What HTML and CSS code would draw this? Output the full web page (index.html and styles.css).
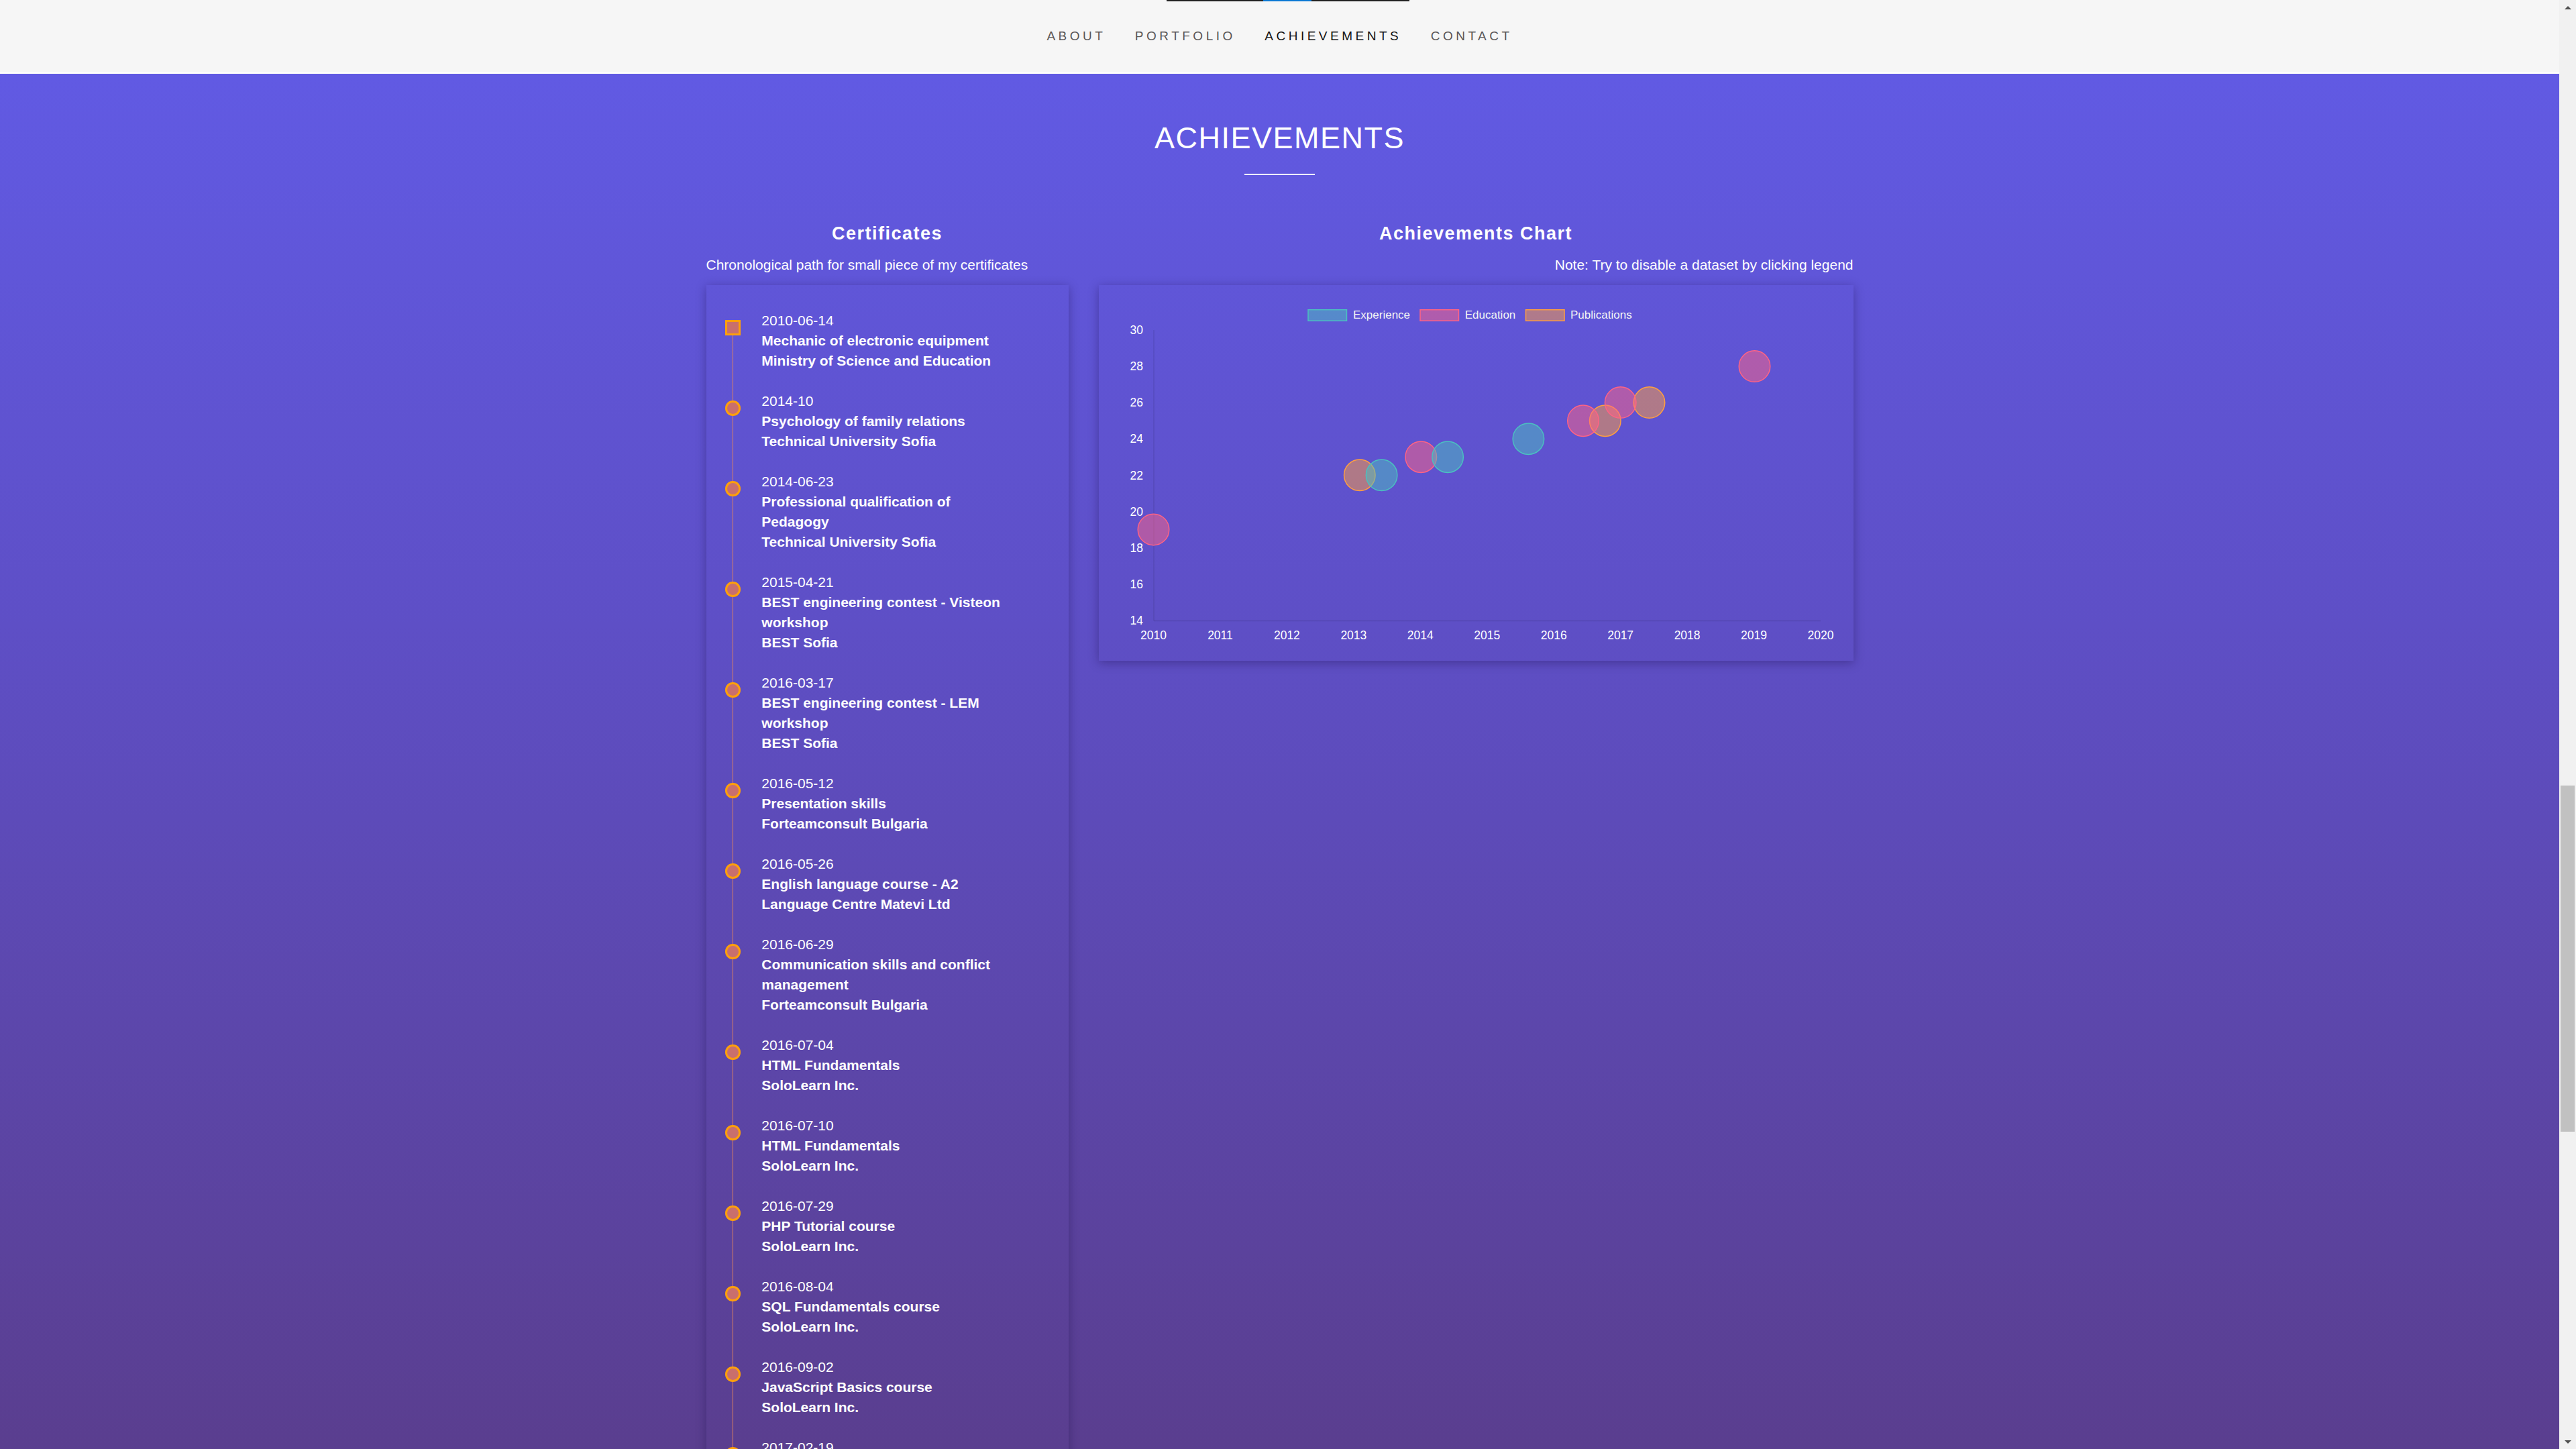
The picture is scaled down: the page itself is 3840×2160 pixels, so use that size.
FILE: index.html
```html
<!DOCTYPE html>
<html lang="en">
<head>
<meta charset="utf-8">
<title>Achievements</title>
<link rel="stylesheet" href="styles.css">
</head>
<body>
<div class="window">
  <div class="page">
    <nav class="nav">
      <div class="nav-progress"><span class="nav-progress-fill"></span></div>
      <a class="nav-link">About</a>
      <a class="nav-link">Portfolio</a>
      <a class="nav-link nav-link--active">Achievements</a>
      <a class="nav-link">Contact</a>
    </nav>
    <section class="achievements">
      <h2 class="section-title">ACHIEVEMENTS</h2>
      <div class="section-rule"></div>
      <div class="columns">
        <div class="col">
          <h3 class="col-title">Certificates</h3>
          <p class="col-sub">Chronological path for small piece of my certificates</p>
          <div class="card timeline-card">
            <ul class="timeline">
              <li class="tl-item"><span class="tl-marker tl-marker--square"></span><div class="tl-text"><div class="tl-date">2010-06-14</div><div class="tl-strong">Mechanic of electronic equipment</div><div class="tl-strong">Ministry of Science and Education</div></div></li>
              <li class="tl-item"><span class="tl-marker"></span><div class="tl-text"><div class="tl-date">2014-10</div><div class="tl-strong">Psychology of family relations</div><div class="tl-strong">Technical University Sofia</div></div></li>
              <li class="tl-item"><span class="tl-marker"></span><div class="tl-text"><div class="tl-date">2014-06-23</div><div class="tl-strong">Professional qualification of Pedagogy</div><div class="tl-strong">Technical University Sofia</div></div></li>
              <li class="tl-item"><span class="tl-marker"></span><div class="tl-text"><div class="tl-date">2015-04-21</div><div class="tl-strong">BEST engineering contest - Visteon workshop</div><div class="tl-strong">BEST Sofia</div></div></li>
              <li class="tl-item"><span class="tl-marker"></span><div class="tl-text"><div class="tl-date">2016-03-17</div><div class="tl-strong">BEST engineering contest - LEM workshop</div><div class="tl-strong">BEST Sofia</div></div></li>
              <li class="tl-item"><span class="tl-marker"></span><div class="tl-text"><div class="tl-date">2016-05-12</div><div class="tl-strong">Presentation skills</div><div class="tl-strong">Forteamconsult Bulgaria</div></div></li>
              <li class="tl-item"><span class="tl-marker"></span><div class="tl-text"><div class="tl-date">2016-05-26</div><div class="tl-strong">English language course - A2</div><div class="tl-strong">Language Centre Matevi Ltd</div></div></li>
              <li class="tl-item"><span class="tl-marker"></span><div class="tl-text"><div class="tl-date">2016-06-29</div><div class="tl-strong">Communication skills and conflict management</div><div class="tl-strong">Forteamconsult Bulgaria</div></div></li>
              <li class="tl-item"><span class="tl-marker"></span><div class="tl-text"><div class="tl-date">2016-07-04</div><div class="tl-strong">HTML Fundamentals</div><div class="tl-strong">SoloLearn Inc.</div></div></li>
              <li class="tl-item"><span class="tl-marker"></span><div class="tl-text"><div class="tl-date">2016-07-10</div><div class="tl-strong">HTML Fundamentals</div><div class="tl-strong">SoloLearn Inc.</div></div></li>
              <li class="tl-item"><span class="tl-marker"></span><div class="tl-text"><div class="tl-date">2016-07-29</div><div class="tl-strong">PHP Tutorial course</div><div class="tl-strong">SoloLearn Inc.</div></div></li>
              <li class="tl-item"><span class="tl-marker"></span><div class="tl-text"><div class="tl-date">2016-08-04</div><div class="tl-strong">SQL Fundamentals course</div><div class="tl-strong">SoloLearn Inc.</div></div></li>
              <li class="tl-item"><span class="tl-marker"></span><div class="tl-text"><div class="tl-date">2016-09-02</div><div class="tl-strong">JavaScript Basics course</div><div class="tl-strong">SoloLearn Inc.</div></div></li>
              <li class="tl-item"><span class="tl-marker"></span><div class="tl-text"><div class="tl-date">2017-02-19</div><div class="tl-strong">CSS Fundamentals course</div><div class="tl-strong">SoloLearn Inc.</div></div></li>
            </ul>
          </div>
        </div>
        <div class="col">
          <h3 class="col-title">Achievements Chart</h3>
          <p class="col-sub col-sub--right">Note: Try to disable a dataset by clicking legend</p>
          <div class="card chart-card">
            <svg class="chart" viewBox="0 0 1125 560" width="1125" height="560">
              <g class="legend">
                <rect x="312" y="36.75" width="57.5" height="16.5" class="exp"/>
                <text x="379" y="50">Experience</text>
                <rect x="479" y="36.75" width="57.5" height="16.5" class="edu"/>
                <text x="545.7" y="50">Education</text>
                <rect x="636.5" y="36.75" width="57.5" height="16.5" class="pub"/>
                <text x="703" y="50">Publications</text>
              </g>
              <line class="axis" x1="82" y1="67" x2="82" y2="500.5"/>
              <line class="axis" x1="82" y1="500.5" x2="1076" y2="500.5"/>
              <g class="ylabels">
                <text x="66" y="73.2">30</text>
                <text x="66" y="127.3">28</text>
                <text x="66" y="181.3">26</text>
                <text x="66" y="235.4">24</text>
                <text x="66" y="289.5">22</text>
                <text x="66" y="343.5">20</text>
                <text x="66" y="397.6">18</text>
                <text x="66" y="451.6">16</text>
                <text x="66" y="505.7">14</text>
              </g>
              <g class="xlabels">
                <text x="81.5" y="528">2010</text>
                <text x="180.95" y="528">2011</text>
                <text x="280.4" y="528">2012</text>
                <text x="379.85" y="528">2013</text>
                <text x="479.3" y="528">2014</text>
                <text x="578.75" y="528">2015</text>
                <text x="678.2" y="528">2016</text>
                <text x="777.65" y="528">2017</text>
                <text x="877.1" y="528">2018</text>
                <text x="976.55" y="528">2019</text>
                <text x="1076" y="528">2020</text>
              </g>
              <g class="bubbles">
                <circle class="pub" cx="388.8" cy="283.3" r="23.25"/>
                <circle class="pub" cx="754.8" cy="202.2" r="23.25"/>
                <circle class="pub" cx="820.5" cy="175.1" r="23.25"/>
                <circle class="edu" cx="81.5" cy="364.4" r="23.25"/>
                <circle class="edu" cx="480.3" cy="256.2" r="23.25"/>
                <circle class="edu" cx="722" cy="202.2" r="23.25"/>
                <circle class="edu" cx="777.7" cy="175.1" r="23.25"/>
                <circle class="edu" cx="977.5" cy="121.1" r="23.25"/>
                <circle class="exp" cx="421.6" cy="283.3" r="23.25"/>
                <circle class="exp" cx="520.1" cy="256.2" r="23.25"/>
                <circle class="exp" cx="640.4" cy="229.2" r="23.25"/>
              </g>
            </svg>
          </div>
        </div>
      </div>
    </section>
  </div>
  <div class="scrollbar">
    <div class="sb-btn"><span class="sb-arrow sb-arrow--up"></span></div>
    <div class="sb-track"><div class="sb-thumb"></div></div>
    <div class="sb-btn"><span class="sb-arrow sb-arrow--down"></span></div>
  </div>
</div>
</body>
</html>
```

FILE: styles.css
```css
html, body {
  margin: 0;
  padding: 0;
  height: 100%;
  overflow: hidden;
}

body {
  font-family: "Liberation Sans", Arial, sans-serif;
  color: #fff;
}

.window {
  display: flex;
  height: 2160px;
  overflow: hidden;
}

.page {
  flex: 1;
  display: flex;
  flex-direction: column;
  min-width: 0;
}

/* ---------- Navigation ---------- */
.nav {
  position: relative;
  flex: none;
  height: 107px;
  border-bottom: 3px solid #fdfdfd;
  background: #f6f6f6;
  display: flex;
  justify-content: center;
  align-items: center;
}

.nav-progress {
  position: absolute;
  top: 0;
  left: 1739px;
  width: 362px;
  height: 2px;
  background: #222;
}

.nav-progress-fill {
  position: absolute;
  top: 0;
  left: 144px;
  width: 72px;
  height: 2px;
  background: #0b79d4;
}

.nav-link {
  padding: 0 21.75px;
  font-size: 19px;
  letter-spacing: 4.5px;
  text-transform: uppercase;
  color: #5a5656;
  text-decoration: none;
  line-height: 30px;
}

.nav-link--active {
  color: #111;
}

/* ---------- Section ---------- */
.achievements {
  flex: 1;
  overflow: hidden;
  padding-top: 71px;
  background: linear-gradient(to bottom, #615ae3 0%, #5e4fc6 40%, #5a3e8f 100%);
}

.section-title {
  margin: 0;
  font-size: 45px;
  font-weight: normal;
  letter-spacing: 1.5px;
  line-height: 49.5px;
  text-align: center;
}

.section-rule {
  width: 105px;
  height: 2px;
  margin: 28.5px auto 0;
  background: #fff;
}

.columns {
  width: 1710px;
  margin: 73px auto 0;
  display: grid;
  grid-template-columns: 540px 1125px;
  column-gap: 45px;
  align-items: start;
}

.col-title {
  margin: 0;
  font-size: 27px;
  font-weight: bold;
  letter-spacing: 1.5px;
  line-height: 29.7px;
  text-align: center;
}

.col-sub {
  margin: 15.8px 0 0;
  font-size: 21px;
  line-height: 30px;
}

.col-sub--right {
  text-align: right;
}

.card {
  margin-top: 15.5px;
  box-shadow: 0 3px 14px rgba(20, 10, 60, 0.35);
}

/* ---------- Timeline ---------- */
.timeline-card {
  padding: 37.5px 0 40px;
}

.timeline {
  position: relative;
  list-style: none;
  margin: 0;
  padding: 0;
}

.timeline::before {
  content: "";
  position: absolute;
  left: 39px;
  top: 26px;
  bottom: 0;
  width: 1.5px;
  background: #e0825f;
}

.tl-item {
  display: flex;
  align-items: flex-start;
  margin-bottom: 30px;
}

.tl-marker {
  position: relative;
  flex: none;
  box-sizing: border-box;
  width: 22.5px;
  height: 22.5px;
  margin: 14.75px 0 0 28.75px;
  border: 3px solid #ffa00a;
  border-radius: 50%;
  background: #c96f6d;
}

.tl-marker--square {
  border-radius: 0;
}

.tl-text {
  width: 370px;
  margin-left: 31.55px;
  font-size: 21px;
  line-height: 30px;
}

.tl-strong {
  font-weight: bold;
}

/* ---------- Chart ---------- */
.chart-card {
  height: 560px;
}

.chart {
  display: block;
  font-family: "Liberation Sans", Arial, sans-serif;
}

.chart .legend text {
  font-size: 17px;
  fill: #f4f4f4;
}

.chart .axis {
  stroke: rgba(0, 0, 0, 0.1);
  stroke-width: 1.5;
}

.chart .ylabels text {
  font-size: 17.5px;
  fill: #fff;
  text-anchor: end;
}

.chart .xlabels text {
  font-size: 17.5px;
  fill: #fff;
  text-anchor: middle;
}

.chart .exp {
  fill: rgba(75, 192, 192, 0.5);
  stroke: rgb(75, 192, 192);
  stroke-width: 1.5;
}

.chart .edu {
  fill: rgba(255, 99, 132, 0.5);
  stroke: rgb(255, 99, 132);
  stroke-width: 1.5;
}

.chart .pub {
  fill: rgba(255, 159, 64, 0.5);
  stroke: rgb(255, 159, 64);
  stroke-width: 1.5;
}

/* ---------- Scrollbar ---------- */
.scrollbar {
  flex: none;
  width: 25px;
  display: flex;
  flex-direction: column;
  background: #f1f1f1;
}

.sb-btn {
  flex: none;
  height: 25px;
  display: flex;
  align-items: center;
  justify-content: center;
}

.sb-arrow {
  width: 0;
  height: 0;
  border-left: 5.5px solid transparent;
  border-right: 5.5px solid transparent;
}

.sb-arrow--up {
  border-bottom: 5px solid #505050;
  margin-bottom: 3px;
}

.sb-arrow--down {
  border-top: 5px solid #505050;
  margin-top: 3px;
}

.sb-track {
  flex: 1;
  padding: 0 2px;
}

.sb-thumb {
  margin-top: 1146px;
  height: 516px;
  background: #c1c1c1;
}
```
